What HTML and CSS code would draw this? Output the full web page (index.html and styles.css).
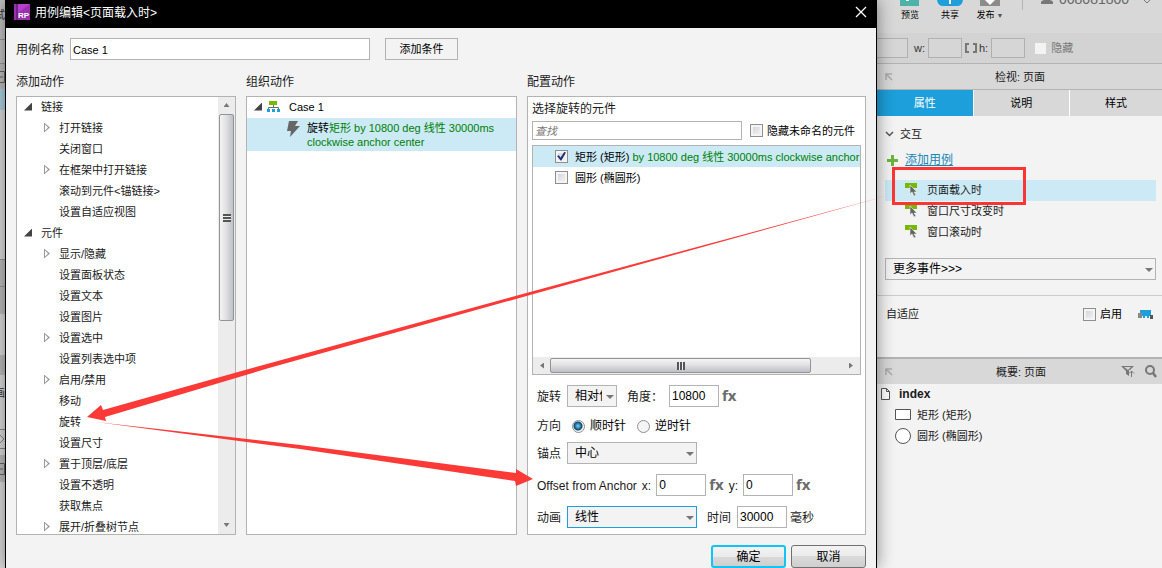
FILE: index.html
```html
<!DOCTYPE html>
<html lang="zh-CN">
<head>
  <meta charset="UTF-8">
  <title>用例编辑</title>
  <link rel="stylesheet" href="styles.css">
</head>
<body>
  <div class="app">

    <!-- edge of the workspace behind the dialog -->
    <div class="workspace">
      <div class="strip strip-tools">试</div>
      <div class="strip strip-line"></div>
      <div class="strip strip-head">
        <svg width="12" height="12" viewBox="0 0 12 12"><path d="M0 .5h11.500v11H0M0 6h10M6.500 2v8" fill="none" stroke="#666"/></svg>
      </div>
      <div class="strip strip-active"></div>
      <div class="strip strip-pages"></div>
      <div class="strip strip-gray"></div>
      <div class="strip strip-search"></div>
      <div class="strip strip-row"></div>
      <div class="strip strip-bar"></div>
      <div class="strip strip-label">画</div>
      <div class="strip strip-shape">
        <svg width="6" height="20" viewBox="0 0 6 20"><path d="M0 .5h6M0 19.500h6M0 5l5 5-5 5" fill="none" stroke="#888"/></svg>
      </div>
      <div class="strip strip-master">
        <svg width="12" height="12" viewBox="0 0 12 12"><path d="M0 .5h11.500v11H0M0 6h10M6.500 2v8" fill="none" stroke="#666"/></svg>
      </div>
    </div>

    <main class="dialog">
      <header class="titlebar">
        <svg class="logo" width="16" height="16" viewBox="0 0 16 16">
          <rect width="16" height="16" fill="#9b2fae"/>
          <path d="M4 0h12L4 9z" fill="#b63fd0"/>
          <path d="M3 0v16" stroke="#4d1260"/>
          <text x="4" y="14" class="logo-text">RP</text>
        </svg>
        <h1>用例编辑&lt;页面载入时&gt;</h1>
        <button class="close" aria-label="关闭">
          <svg width="12" height="12" viewBox="0 0 12 12"><path d="M1 1l10 10M11 1L1 11" stroke="#fff" stroke-width="1.3"/></svg>
        </button>
      </header>

      <div class="dialog-body">
        <div class="name-row">
          <label for="caseName">用例名称</label>
          <input id="caseName" class="field case-name" type="text" value="Case 1">
          <button class="flat-button">添加条件</button>
        </div>

        <div class="columns">
          <section class="column">
            <h2>添加动作</h2>
            <div class="panel tree-panel">
              <ul class="tree">
                <li class="group open">链接</li>
                <li class="more">打开链接</li>
                <li>关闭窗口</li>
                <li class="more">在框架中打开链接</li>
                <li>滚动到元件&lt;锚链接&gt;</li>
                <li>设置自适应视图</li>
                <li class="group open">元件</li>
                <li class="more">显示/隐藏</li>
                <li>设置面板状态</li>
                <li>设置文本</li>
                <li>设置图片</li>
                <li class="more">设置选中</li>
                <li>设置列表选中项</li>
                <li class="more">启用/禁用</li>
                <li>移动</li>
                <li>旋转</li>
                <li>设置尺寸</li>
                <li class="more">置于顶层/底层</li>
                <li>设置不透明</li>
                <li>获取焦点</li>
                <li class="more">展开/折叠树节点</li>
              </ul>
              <div class="scrollbar vertical">
                <span class="arrow up"></span>
                <div class="thumb"><span class="grip"></span></div>
                <span class="arrow down"></span>
              </div>
            </div>
          </section>

          <section class="column">
            <h2>组织动作</h2>
            <div class="panel">
              <div class="case-row">
                <svg width="13" height="12" viewBox="0 0 13 12">
                  <path d="M2 0h8v4H2z" fill="#76b900"/>
                  <path d="M6.500 4v3M1.500 9V6.500h10V9" fill="none" stroke="#6b6b6b"/>
                  <path d="M0 8h3v3H0zM5 8h3v3H5zM10 8h3v3h-3z" fill="#1c9fda"/>
                </svg>
                <span>Case 1</span>
              </div>
              <div class="action-row">
                <svg width="13" height="16" viewBox="0 0 13 16"><path d="M2 0h9L8 5h5L3 16l1-6H0z" fill="#666"/></svg>
                <p>旋转<span class="detail">矩形 by 10800 deg 线性 30000ms clockwise anchor center</span></p>
              </div>
            </div>
          </section>

          <section class="column">
            <h2>配置动作</h2>
            <div class="panel config-panel">
              <h3>选择旋转的元件</h3>
              <div class="search-row">
                <input class="field search" type="text" placeholder="查找" aria-label="查找">
                <label class="check"><input type="checkbox">隐藏未命名的元件</label>
              </div>
              <div class="widget-list">
                <label class="check widget selected"><input type="checkbox" checked><span>矩形 (矩形) <span class="detail">by 10800 deg 线性 30000ms clockwise anchor center</span></span></label>
                <label class="check widget"><input type="checkbox"><span>圆形 (椭圆形)</span></label>
                <div class="scrollbar horizontal">
                  <span class="arrow left"></span>
                  <div class="thumb"><span class="grip"></span></div>
                  <span class="arrow right"></span>
                </div>
              </div>

              <form class="settings">
                <div class="line">
                  <label class="caption" for="rotate">旋转</label>
                  <span class="select small"><select id="rotate"><option>相对位置</option></select></span>
                  <label class="angle" for="angle">角度：</label>
                  <input id="angle" class="field number" type="text" value="10800">
                  <button type="button" class="fx">fx</button>
                </div>
                <div class="line direction">
                  <span class="caption">方向</span>
                  <label class="radio"><input type="radio" name="direction" checked>顺时针</label>
                  <label class="radio"><input type="radio" name="direction">逆时针</label>
                </div>
                <div class="line">
                  <label class="caption" for="anchor">锚点</label>
                  <span class="select"><select id="anchor"><option>中心</option></select></span>
                </div>
                <div class="line">
                  <span class="offset">Offset from Anchor</span>
                  <label class="axis" for="offsetX">x:</label>
                  <input id="offsetX" class="field number" type="text" value="0">
                  <button type="button" class="fx">fx</button>
                  <label class="axis" for="offsetY">y:</label>
                  <input id="offsetY" class="field number" type="text" value="0">
                  <button type="button" class="fx">fx</button>
                </div>
                <div class="line">
                  <label class="caption" for="easing">动画</label>
                  <span class="select focused"><select id="easing"><option>线性</option></select></span>
                  <label class="time" for="duration">时间</label>
                  <input id="duration" class="field number" type="text" value="30000">
                  <span class="unit">毫秒</span>
                </div>
              </form>
            </div>
          </section>
        </div>

        <footer class="buttons">
          <button class="push primary">确定</button>
          <button class="push">取消</button>
        </footer>
      </div>
    </main>

    <aside class="sidebar">
      <div class="topbar">
        <button class="tool">
          <svg width="20" height="6" viewBox="0 0 20 6"><path d="M0 0h19v6H0z" fill="#4db3a9"/><path d="M6 0h3v1H6z" fill="#fff"/></svg>
          预览
        </button>
        <button class="tool">
          <svg width="26" height="6" viewBox="0 0 26 6"><path d="M0 0h26q-1 6-6 6H6Q1 6 0 0z" fill="#1c9fda"/><path d="M12 0h2v4h-2z" fill="#fff"/></svg>
          共享
        </button>
        <button class="tool">
          <svg width="20" height="6" viewBox="0 0 20 6"><path d="M0 0h20v6H0z" fill="#8c8c8c"/><path d="M5 0h10l-5 5z" fill="#fff"/></svg>
          <span>发布<i class="drop">▼</i></span>
        </button>
        <div class="account">
          <svg width="12" height="4" viewBox="0 0 12 4"><path d="M0 4V2q0-1 3-2h6q3 1 3 2v2z" fill="#777"/></svg>
          <span>068081800</span>
          <svg width="8" height="4" viewBox="0 0 8 4"><path d="M1 0l3 3 3-3" fill="none" stroke="#777"/></svg>
        </div>
      </div>

      <div class="size-bar">
        <input class="size-field" type="text" aria-label="y">
        <label for="sizeW">w:</label>
        <input id="sizeW" class="size-field" type="text">
        <svg width="12" height="10" viewBox="0 0 12 10"><path d="M4 1H1v8h3M8 1h3v8H8" fill="none" stroke="#777" stroke-width="2"/></svg>
        <label for="sizeH">h:</label>
        <input id="sizeH" class="size-field" type="text">
        <label class="hide-check"><input type="checkbox" disabled>隐藏</label>
      </div>

      <div class="pane-title">
        <svg width="8" height="8" viewBox="0 0 8 8"><path d="M1 7V1h6M1 1l6 6" fill="none" stroke="#aaa" stroke-width="1.500"/></svg>
        <h2>检视: 页面</h2>
      </div>
      <nav class="tabs">
        <button class="tab active">属性</button>
        <button class="tab">说明</button>
        <button class="tab">样式</button>
      </nav>

      <section class="interactions">
        <h3>
          <svg width="9" height="6" viewBox="0 0 9 6"><path d="M1 1l3.500 3.500L8 1" fill="none" stroke="#555" stroke-width="1.500"/></svg>
          交互
        </h3>
        <div class="add-case">
          <svg width="11" height="11" viewBox="0 0 11 11"><path d="M4 0h3v4h4v3H7v4H4V7H0V4h4z" fill="#6cb33f"/></svg>
          <a href="#">添加用例</a>
        </div>
        <ul class="events">
          <li class="selected">
            <svg width="13" height="13" viewBox="0 0 13 13"><path d="M0 0h12v5H0z" fill="#76b900"/><path d="M5 2v9l2-2 2 4 2-1-2-3h3z" fill="#666" stroke="#eef4e6" stroke-width=".6"/></svg>
            页面载入时
          </li>
          <li>
            <svg width="13" height="13" viewBox="0 0 13 13"><path d="M0 0h12v5H0z" fill="#76b900"/><path d="M5 2v9l2-2 2 4 2-1-2-3h3z" fill="#666" stroke="#eef4e6" stroke-width=".6"/></svg>
            窗口尺寸改变时
          </li>
          <li>
            <svg width="13" height="13" viewBox="0 0 13 13"><path d="M0 0h12v5H0z" fill="#76b900"/><path d="M5 2v9l2-2 2 4 2-1-2-3h3z" fill="#666" stroke="#eef4e6" stroke-width=".6"/></svg>
            窗口滚动时
          </li>
        </ul>
        <span class="select wide"><select aria-label="更多事件"><option>更多事件&gt;&gt;&gt;</option></select></span>
      </section>

      <section class="adaptive">
        <h3>自适应</h3>
        <label class="check"><input type="checkbox">启用</label>
        <svg width="15" height="9" viewBox="0 0 15 9"><path d="M2 0h11v6h-2v2H9V6H7v2H5V6H2z" fill="#1c9fda"/><path d="M0 3h4v5H0z" fill="#888"/><path d="M12 5h3v4h-3z" fill="#555"/></svg>
      </section>

      <div class="pane-title outline-title">
        <svg width="8" height="8" viewBox="0 0 8 8"><path d="M1 7V1h6M1 1l6 6" fill="none" stroke="#aaa" stroke-width="1.500"/></svg>
        <h2>概要: 页面</h2>
        <svg width="14" height="11" viewBox="0 0 14 11"><path d="M0 0h13L9 4H8v6L5 8V5z" fill="#777"/><path d="M3 1h7L7 4z" fill="#d5d5d5"/><path d="M10.500 11V5M8 7.500L10.500 5 13 7.500" fill="none" stroke="#777"/></svg>
        <svg width="12" height="13" viewBox="0 0 12 13"><circle cx="5" cy="5" r="4" fill="none" stroke="#777" stroke-width="2"/><path d="M8 8l3 4" stroke="#777" stroke-width="2.500"/></svg>
      </div>
      <ul class="outline">
        <li class="page">
          <svg width="9" height="12" viewBox="0 0 9 12"><path d="M.5.5h5l3 3v8h-8zM5.500.5v3h3" fill="#fff" stroke="#555"/></svg>
          index
        </li>
        <li>
          <svg width="16" height="16" viewBox="0 0 16 16"><path d="M.5 2.500h15v10H.5z" fill="#fff" stroke="#555"/></svg>
          矩形 (矩形)
        </li>
        <li>
          <svg width="16" height="16" viewBox="0 0 16 16"><circle cx="8" cy="8" r="7.500" fill="#fff" stroke="#555"/></svg>
          圆形 (椭圆形)
        </li>
      </ul>
    </aside>

    <!-- red guide marks drawn over the window -->
    <svg class="marks" width="1162" height="568" viewBox="0 0 1162 568">
      <path d="M87 417l14-12 2 5 142-40 285-78 356-96-356 99-261 73-164 49 1 4z"/>
      <path d="M96 422l204 23 216 28v-4l17 10-17 7-1-5-215-32z"/>
      <rect x="893.500" y="168.500" width="131" height="35"/>
    </svg>
  </div>
</body>
</html>
```
FILE: styles.css
```css
* {
  box-sizing: border-box;
}

body {
  margin: 0;
  font-family: "Liberation Sans", "Noto Sans CJK SC", sans-serif;
  font-size: 11px;
  line-height: 16px;
  color: #1a1a1a;
  background-color: #f3f3f3;
}

h1, h2, h3, p, ul {
  margin: 0;
  padding: 0;
  font-weight: normal;
  font-size: 12px;
}

ul {
  list-style: none;
}

svg {
  flex: none;
}

button, input, select {
  font: inherit;
  color: #000;
  margin: 0;
}

.app {
  position: relative;
  display: flex;
  height: 100vh;
  overflow: hidden;
}

/* workspace */

.workspace {
  flex: none;
  width: 5px;
  overflow: hidden;
  background-color: #dcdcdc;
}

.strip {
  display: flex;
  align-items: center;
  justify-content: flex-end;
  color: #333;
}

.strip-tools {
  height: 39px;
  padding-bottom: 10px;
  background-color: #c4c4c4;
}

.strip-line {
  height: 25px;
  border-top: 1px solid #999;
  border-bottom: 1px solid #999;
  background-color: #c4c4c4;
}

.strip-head {
  height: 25px;
  background-color: #c0c0c0;
}

.strip-active {
  height: 21px;
  background-color: #aed3e1;
}

.strip-pages {
  height: 149px;
}

.strip-gray {
  height: 27px;
  border-top: 1px solid #999;
  background-color: #bdbdbd;
}

.strip-search {
  height: 28px;
  border-top: 1px solid #999;
  background-color: #bdbdbd;
}

.strip-row {
  height: 41px;
}

.strip-bar {
  height: 20px;
  background-color: #bdbdbd;
}

.strip-label {
  height: 36px;
}

.strip-shape {
  height: 44px;
  padding-top: 12px;
}

.strip-master {
  height: 27px;
  background-color: #bdbdbd;
}

/* dialog */

.dialog {
  position: relative;
  z-index: 1;
  flex: 1;
  min-width: 0;
  display: flex;
  flex-direction: column;
  border: solid #000;
  border-width: 0 1px;
  background-color: #f3f3f3;
  box-shadow: 0 0 16px rgba(0, 0, 0, 0.45);
}

.titlebar {
  display: flex;
  align-items: center;
  gap: 5px;
  height: 28px;
  padding: 0 9px 4px 8px;
  background-color: #000;
  color: #fff;
}

.logo-text {
  font-size: 8px;
  font-weight: bold;
  fill: #fff;
}

.titlebar h1 {
  flex: 1;
  padding-top: 2px;
}

.close {
  display: flex;
  padding: 0;
  border: none;
  background: none;
}

.dialog-body {
  flex: 1;
  min-height: 0;
  display: flex;
  flex-direction: column;
  padding: 10px 10px 0;
}

.field {
  height: 22px;
  padding: 0 2px;
  border: 1px solid #b3b3b3;
  background-color: #fff;
  outline: none;
}

.name-row {
  display: flex;
  align-items: center;
  font-size: 12px;
}

.name-row label {
  padding-top: 2px;
}

.case-name {
  width: 300px;
  margin: 0 15px 0 6px;
  padding-top: 2px;
  font-size: 11px;
}

.flat-button {
  width: 73px;
  height: 22px;
  padding: 0;
  border: 1px solid #b3b3b3;
  background-color: #f3f3f3;
  font-size: 11px;
}

.columns {
  flex: 1;
  min-height: 0;
  display: grid;
  grid-template-columns: 220px 271px minmax(0, 1fr);
  gap: 10px;
  padding-top: 14px;
}

.column {
  display: flex;
  flex-direction: column;
  min-height: 0;
}

.column h2 {
  margin-bottom: 6px;
}

.panel {
  flex: 1;
  min-height: 0;
  border: 1px solid #b3b3b3;
  background-color: #fff;
}

/* action tree */

.tree-panel {
  display: flex;
  overflow: hidden;
}

.tree {
  flex: 1;
  font-size: 11px;
}

.tree li {
  display: flex;
  align-items: center;
  height: 21px;
  padding: 0 0 2px 42px;
}

.tree .group {
  padding-left: 7px;
}

.tree .more {
  padding-left: 27px;
}

.open::before, .case-row::before {
  content: "";
  width: 8px;
  height: 8px;
  margin-right: 9px;
  background-color: #444;
  clip-path: polygon(100% 0, 100% 100%, 0 100%);
}

.more::before {
  content: "";
  width: 6px;
  height: 10px;
  margin-right: 9px;
  background-color: #999;
  clip-path: polygon(0 0, 100% 50%, 0 100%, 0 0, 1px 2px, 1px 8px, 4px 50%, 1px 2px);
}

/* scrollbars */

.scrollbar {
  display: flex;
  align-items: center;
  background-color: #ececec;
}

.scrollbar.vertical {
  flex-direction: column;
  width: 17px;
}

.scrollbar.horizontal {
  height: 17px;
  margin-top: auto;
}

.thumb {
  display: flex;
  align-items: center;
  justify-content: center;
  border: 1px solid #949494;
  border-radius: 2px;
}

.vertical .thumb {
  width: 15px;
  height: 207px;
  margin: 0 0 auto;
  background: linear-gradient(to right, #f4f4f4, #e2e2e4 45%, #bfc0c6);
}

.horizontal .thumb {
  width: 261px;
  height: 15px;
  margin-right: auto;
  background: linear-gradient(#f4f4f4, #e2e2e4 45%, #bfc0c6);
}

.grip {
  width: 8px;
  height: 8px;
}

.vertical .grip {
  background: repeating-linear-gradient(#555 0 2px, #eee 2px 3px);
}

.horizontal .grip {
  background: repeating-linear-gradient(to right, #555 0 2px, #eee 2px 3px);
}

.arrow {
  width: 6px;
  height: 4px;
  background-color: #777;
}

.up {
  margin: 6px 0 7px;
  clip-path: polygon(50% 0, 100% 100%, 0 100%);
}

.down {
  margin-bottom: 7px;
  clip-path: polygon(0 0, 100% 0, 50% 100%);
}

.left, .right {
  width: 4px;
  height: 6px;
}

.left {
  margin: 0 6px 0 7px;
  clip-path: polygon(0 50%, 100% 0, 100% 100%);
}

.right {
  margin-right: 7px;
  clip-path: polygon(0 0, 100% 50%, 0 100%);
}

/* organized case */

.case-row {
  display: flex;
  align-items: center;
  height: 21px;
  padding: 0 0 2px 7px;
  color: #000;
}

.case-row::before {
  margin-right: 5px;
}

.case-row span {
  margin-left: 9px;
}

.action-row {
  display: flex;
  gap: 7px;
  padding: 3px 20px 2px 40px;
  background-color: #cbeaf6;
  color: #000;
}

.action-row p {
  font-size: 11px;
  line-height: 14px;
}

.detail {
  color: #008000;
}

/* configure */

.config-panel {
  display: flex;
  flex-direction: column;
  padding: 4px 4px 6px;
}

.search-row {
  display: flex;
  align-items: center;
  gap: 8px;
  margin: 4px 0 5px;
}

.search {
  width: 210px;
  height: 19px;
}

.search::placeholder {
  font-style: italic;
  color: #777;
}

.check {
  display: flex;
  align-items: center;
  gap: 4px;
  color: #000;
  white-space: nowrap;
}

.check input {
  appearance: none;
  flex: none;
  width: 13px;
  height: 13px;
  border: 1px solid #8e8f8f;
  background: linear-gradient(135deg, #cfd2d8, #f6f6f6);
  box-shadow: inset 0 0 0 2px #f4f4f4;
}

.check input:checked::before {
  content: "";
  display: block;
  width: 9px;
  height: 9px;
  margin: 1px;
  background-color: #1f2f7a;
  clip-path: polygon(0 45%, 20% 35%, 40% 62%, 80% 0, 100% 5%, 45% 100%);
}

.widget-list {
  flex: 1;
  display: flex;
  flex-direction: column;
  border: 1px solid #b3b3b3;
  overflow: hidden;
}

.widget {
  gap: 7px;
  height: 21px;
  padding-left: 22px;
}

.selected {
  background-color: #cbeaf6;
}

.settings {
  display: flex;
  flex-direction: column;
  gap: 10px;
  margin-top: 10px;
  padding-left: 5px;
  font-size: 12px;
}

.line {
  display: flex;
  align-items: center;
  height: 22px;
  white-space: nowrap;
}

.line > label, .line > span:not(.select) {
  padding-top: 2px;
}

.direction {
  margin: -3px 0 -4px;
}

.caption {
  width: 30px;
}

.select {
  position: relative;
  flex: none;
  width: 130px;
  height: 22px;
}

.select.small {
  width: 50px;
}

.select select {
  appearance: none;
  display: block;
  width: 100%;
  height: 100%;
  padding: 0 14px 0 7px;
  border: 1px solid #b3b3b3;
  border-radius: 0;
  background-color: #f3f3f3;
  font-size: 12px;
  outline: none;
}

.select.focused select {
  border-color: #1c9fda;
}

.select::after {
  content: "";
  position: absolute;
  right: 3px;
  top: 10px;
  width: 8px;
  height: 4px;
  background-color: #777;
  clip-path: polygon(0 0, 100% 0, 50% 100%);
}

.angle {
  width: 42px;
  margin-left: 10px;
}

.number {
  width: 50px;
  font-size: 12px;
}

.fx {
  padding: 0 0 2px;
  margin-left: 3px;
  border: none;
  background: none;
  font-family: "Open Sans", sans-serif;
  font-size: 15px;
  font-weight: bold;
  color: #6b6b6b;
}

.line > .radio {
  display: flex;
  align-items: center;
  gap: 5px;
  margin: 0 6px 0 5px;
  color: #000;
}

.radio input {
  appearance: none;
  width: 13px;
  height: 13px;
  border: 1px solid #8e8f8f;
  border-radius: 50%;
  background-color: #f4f4f4;
}

.radio input:checked {
  background: radial-gradient(circle at 5px 5px, #7fd4f2 0, #17709c 3px, #123f60 4px, #f4f4f4 5px);
}

.axis {
  margin: 0 5px;
}

.time {
  width: 30px;
  margin-left: 10px;
}

.unit {
  margin-left: 3px;
}

.buttons {
  display: flex;
  justify-content: flex-end;
  gap: 5px;
  padding-top: 10px;
}

.push {
  width: 75px;
  height: 23px;
  padding: 0;
  border: 1px solid #707070;
  border-radius: 3px;
  background: linear-gradient(#f3f3f3, #ebebeb 50%, #dadada 50%, #cfcfcf);
  font-size: 12px;
}

.push.primary {
  border: 2px solid #12c4f3;
}

/* sidebar */

.sidebar {
  flex: none;
  width: 285px;
  background-color: #f3f3f3;
}

.topbar {
  display: flex;
  height: 33px;
  overflow: hidden;
  background-color: #d8d8d8;
}

.tool {
  display: flex;
  flex-direction: column;
  align-items: center;
  gap: 1px;
  width: 40px;
  height: 24px;
  padding: 0;
  border: none;
  background: none;
  font-size: 9px;
}

.tool:first-child {
  margin-left: 13px;
}

.drop {
  margin-left: 2px;
  font-size: 7px;
  font-style: normal;
  color: #555;
}

.account {
  display: flex;
  align-items: flex-end;
  gap: 6px;
  height: 10px;
  margin-left: 12px;
  padding: 0 0 6px 18px;
  border-left: 1px solid #b3b3b3;
  font-size: 14px;
  color: #666;
}

.account span {
  width: 78px;
  line-height: 10px;
}

.size-bar {
  display: flex;
  align-items: center;
  height: 30px;
  background-color: #d3d3d3;
  color: #333;
}

.size-bar > label {
  padding: 0 3px 0 2px;
}

.size-field {
  width: 34px;
  height: 20px;
  border: 1px solid #b0b0b0;
  background-color: #d6d6d6;
}

.size-field:first-child {
  width: 31px;
  border-left: none;
  margin-right: 4px;
}

.size-bar svg {
  margin-left: 3px;
}

.size-bar .hide-check {
  display: flex;
  align-items: center;
  gap: 5px;
  margin-left: 8px;
  color: #777;
}

.hide-check input {
  appearance: none;
  width: 11px;
  height: 11px;
  background-color: #f3f3f3;
}

.pane-title {
  display: flex;
  align-items: center;
  gap: 10px;
  height: 27px;
  padding: 0 5px 0 8px;
  border: solid #b3b3b3;
  border-width: 1px 0;
  background-color: #d8d8d8;
}

.pane-title h2 {
  flex: 1;
  padding-right: 20px;
  font-size: 11px;
  text-align: center;
}

.tabs {
  display: grid;
  grid-template-columns: 1fr 1fr 92px;
  gap: 1px;
  background-color: #fff;
}

.tab {
  height: 26px;
  padding: 0;
  border: none;
  background-color: #d8d8d8;
  font-size: 11px;
}

.tab.active {
  background-color: #1c9fda;
  color: #fff;
}

.interactions {
  padding: 10px 6px 15px 8px;
  border-bottom: 1px solid #ccc;
}

.interactions h3 {
  display: flex;
  align-items: center;
  gap: 6px;
  font-size: 11px;
}

.add-case {
  display: flex;
  align-items: center;
  gap: 7px;
  margin: 10px 0 12px 2px;
  font-size: 12px;
}

.add-case a {
  color: #1786b5;
}

.events {
  margin-bottom: 15px;
  font-size: 11px;
}

.events li {
  display: flex;
  align-items: center;
  gap: 9px;
  height: 21px;
  padding: 0 0 2px 20px;
}

.select.wide {
  display: block;
  width: auto;
}

.adaptive {
  display: flex;
  align-items: center;
  height: 61px;
  padding: 0 9px 25px;
}

.adaptive h3 {
  flex: 1;
  font-size: 11px;
}

.adaptive svg {
  margin-left: 16px;
}

.outline-title {
  border-width: 2px 0 0;
}

.outline-title h2 {
  padding: 0 0 0 28px;
}

.outline li {
  display: flex;
  align-items: center;
  gap: 6px;
  height: 21px;
  padding: 0 0 2px 18px;
  font-size: 11px;
}

.outline .page {
  gap: 9px;
  padding-left: 4px;
  font-size: 12px;
  font-weight: bold;
}

/* guide marks */

.marks {
  position: absolute;
  left: 0;
  top: 0;
  z-index: 2;
  pointer-events: none;
  fill: #fb3a38;
}

.marks rect {
  fill: none;
  stroke: #fb3534;
  stroke-width: 3;
}
```
